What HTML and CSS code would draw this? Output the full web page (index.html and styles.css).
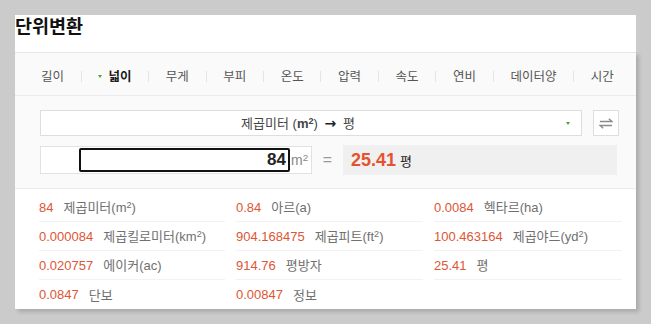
FILE: index.html
```html
<!DOCTYPE html>
<html lang="ko">
<head>
<meta charset="utf-8">
<title>단위변환</title>
<link rel="stylesheet" href="styles.css">
</head>
<body>
<div class="panel">
  <h2 class="title">단위변환</h2>
  <div class="card">
    <nav class="tabs">
      <span class="tab">길이</span><span class="sep"></span>
      <span class="tab active">넓이</span><span class="sep"></span>
      <span class="tab">무게</span><span class="sep"></span>
      <span class="tab">부피</span><span class="sep"></span>
      <span class="tab">온도</span><span class="sep"></span>
      <span class="tab">압력</span><span class="sep"></span>
      <span class="tab">속도</span><span class="sep"></span>
      <span class="tab">연비</span><span class="sep"></span>
      <span class="tab">데이터양</span><span class="sep"></span>
      <span class="tab">시간</span>
    </nav>
    <div class="form">
      <div class="select-row">
        <div class="select">
          <span class="select-text">제곱미터 <span class="latin">(<b>m<sup>2</sup></b>)</span> <span class="arrow">→</span> 평</span>
          <span class="caret"></span>
        </div>
        <button class="swap" type="button" aria-label="바꾸기">
          <svg width="14" height="11" viewBox="0 0 14 11"><path d="M1 3.5H13L9.8 0.8M13 7.5H1L4.2 10.2" fill="none" stroke="#8a8a8a" stroke-width="1.3"/></svg>
        </button>
      </div>
      <div class="value-row">
        <div class="input-group">
          <input class="num-input" type="text" value="84">
          <span class="unit">m<sup>2</sup></span>
        </div>
        <span class="eq">=</span>
        <div class="result"><span class="result-num">25.41</span><span class="result-unit">평</span></div>
      </div>
    </div>
    <div class="results">
      <div class="cell"><span class="val">84</span><span class="lbl">제곱미터<span class="latin">(m<sup>2</sup>)</span></span></div>
      <div class="cell"><span class="val">0.84</span><span class="lbl">아르<span class="latin">(a)</span></span></div>
      <div class="cell"><span class="val">0.0084</span><span class="lbl">헥타르<span class="latin">(ha)</span></span></div>
      <div class="cell"><span class="val">0.000084</span><span class="lbl">제곱킬로미터<span class="latin">(km<sup>2</sup>)</span></span></div>
      <div class="cell"><span class="val">904.168475</span><span class="lbl">제곱피트<span class="latin">(ft<sup>2</sup>)</span></span></div>
      <div class="cell"><span class="val">100.463164</span><span class="lbl">제곱야드<span class="latin">(yd<sup>2</sup>)</span></span></div>
      <div class="cell"><span class="val">0.020757</span><span class="lbl">에이커<span class="latin">(ac)</span></span></div>
      <div class="cell"><span class="val">914.76</span><span class="lbl">평방자</span></div>
      <div class="cell"><span class="val">25.41</span><span class="lbl">평</span></div>
      <div class="cell last"><span class="val">0.0847</span><span class="lbl">단보</span></div>
      <div class="cell last"><span class="val">0.00847</span><span class="lbl">정보</span></div>
      <div class="cell last"></div>
    </div>
  </div>
</div>
</body>
</html>
```
FILE: styles.css
```css
* { box-sizing: border-box; }

html, body {
  margin: 0;
  padding: 0;
}

body {
  background: #cbcbcb;
  font-family: "Liberation Sans", "Noto Sans CJK KR", sans-serif;
  color: #333;
  padding: 15px 0 0 15px;
  height: 324px;
  overflow: hidden;
}

.panel {
  width: 621px;
  background: #fff;
}

.title {
  margin: 0;
  height: 37px;
  font-size: 18.5px;
  line-height: 20px;
  font-weight: bold;
  color: #111;
  font-family: "Noto Sans CJK KR", sans-serif;
}

.card {
  border-top: 1px solid #e6e6e6;
  background: #fafafa;
  box-shadow: 3px 3px 4px rgba(0, 0, 0, 0.16);
}

/* tabs */
.tabs {
  height: 43px;
  padding: 4px 22px 0 26px;
  border-bottom: 1px solid #ebebeb;
  display: flex;
  align-items: center;
  justify-content: space-between;
}

.tab {
  font-family: "Noto Sans CJK KR", sans-serif;
  font-size: 12.5px;
  color: #555;
  line-height: 16px;
  white-space: nowrap;
}

.tab.active {
  font-weight: bold;
  color: #1a1a1a;
  display: flex;
  align-items: center;
}

.tab.active::before {
  content: "";
  width: 0;
  height: 0;
  border-left: 2.5px solid transparent;
  border-right: 2.5px solid transparent;
  border-top: 3.5px solid #5aa032;
  margin-right: 6px;
}

.sep {
  width: 1px;
  height: 11px;
  background: #e4e4e4;
}

/* form */
.form {
  padding: 14px 17px 13px 25px;
}

.select-row {
  display: flex;
  gap: 11px;
  height: 26px;
}

.select {
  flex: 1;
  position: relative;
  background: #fff;
  border: 1px solid #dedede;
  display: flex;
  align-items: center;
  justify-content: center;
  padding-right: 26px;
  font-size: 13px;
  color: #444;
}

.select-text {
  font-family: "Noto Sans CJK KR", sans-serif;
  line-height: 16px;
}

.latin {
  font-family: "Liberation Sans", sans-serif;
}

.latin b {
  font-weight: bold;
}

sup {
  font-size: 0.7em;
  line-height: 0;
  vertical-align: 0.45em;
}

.arrow {
  font-family: "DejaVu Sans", sans-serif;
  font-weight: bold;
  font-size: 14px;
  color: #222;
  margin: 0 3px;
}

.caret {
  position: absolute;
  right: 11px;
  top: 11px;
  width: 0;
  height: 0;
  border-left: 2.5px solid transparent;
  border-right: 2.5px solid transparent;
  border-top: 3.5px solid #5aa032;
}

.swap {
  width: 26px;
  height: 26px;
  padding: 0;
  margin: 0;
  background: #fff;
  border: 1px solid #dedede;
  display: flex;
  align-items: center;
  justify-content: center;
}

.value-row {
  margin-top: 9px;
  height: 30px;
  display: flex;
  align-items: center;
}

.input-group {
  width: 272px;
  height: 28px;
  border: 1px solid #e2e2e2;
  background: #fff;
  display: flex;
  align-items: center;
  padding-left: 38px;
}

.num-input {
  width: 211px;
  height: 24px;
  margin: 0;
  border: 2px solid #111;
  border-radius: 2px;
  padding: 0 2px 0 4px;
  text-align: right;
  font-family: "Liberation Sans", sans-serif;
  font-size: 17px;
  font-weight: bold;
  color: #222;
  background: #fff;
  outline: none;
}

.unit {
  font-family: "Liberation Sans", sans-serif;
  font-size: 14px;
  color: #888;
  margin-left: 1px;
}

.eq {
  width: 31px;
  text-align: center;
  font-family: "Liberation Sans", sans-serif;
  font-size: 16px;
  color: #9a9a9a;
}

.result {
  width: 274px;
  height: 30px;
  background: #f0f0f0;
  display: flex;
  align-items: center;
  padding-left: 8px;
}

.result-num {
  font-family: "Liberation Sans", sans-serif;
  font-size: 18px;
  font-weight: bold;
  color: #e4532f;
}

.result-unit {
  font-family: "Noto Sans CJK KR", sans-serif;
  font-size: 13px;
  color: #222;
  margin-left: 4px;
}

/* results */
.results {
  background: #fff;
  border-top: 1px solid #ececec;
  padding: 4px 3px 0 24px;
  display: grid;
  grid-template-columns: 197px 198px 1fr;
}

.cell {
  height: 29px;
  margin-right: 11px;
  border-bottom: 1px solid #f2f2f2;
  display: flex;
  align-items: center;
  font-size: 13px;
  white-space: nowrap;
}

.cell.last {
  border-bottom: none;
}

.val {
  font-family: "Liberation Sans", sans-serif;
  color: #dd5636;
  margin-right: 10px;
}

.lbl {
  font-family: "Noto Sans CJK KR", sans-serif;
  color: #707070;
  line-height: 16px;
}
```
